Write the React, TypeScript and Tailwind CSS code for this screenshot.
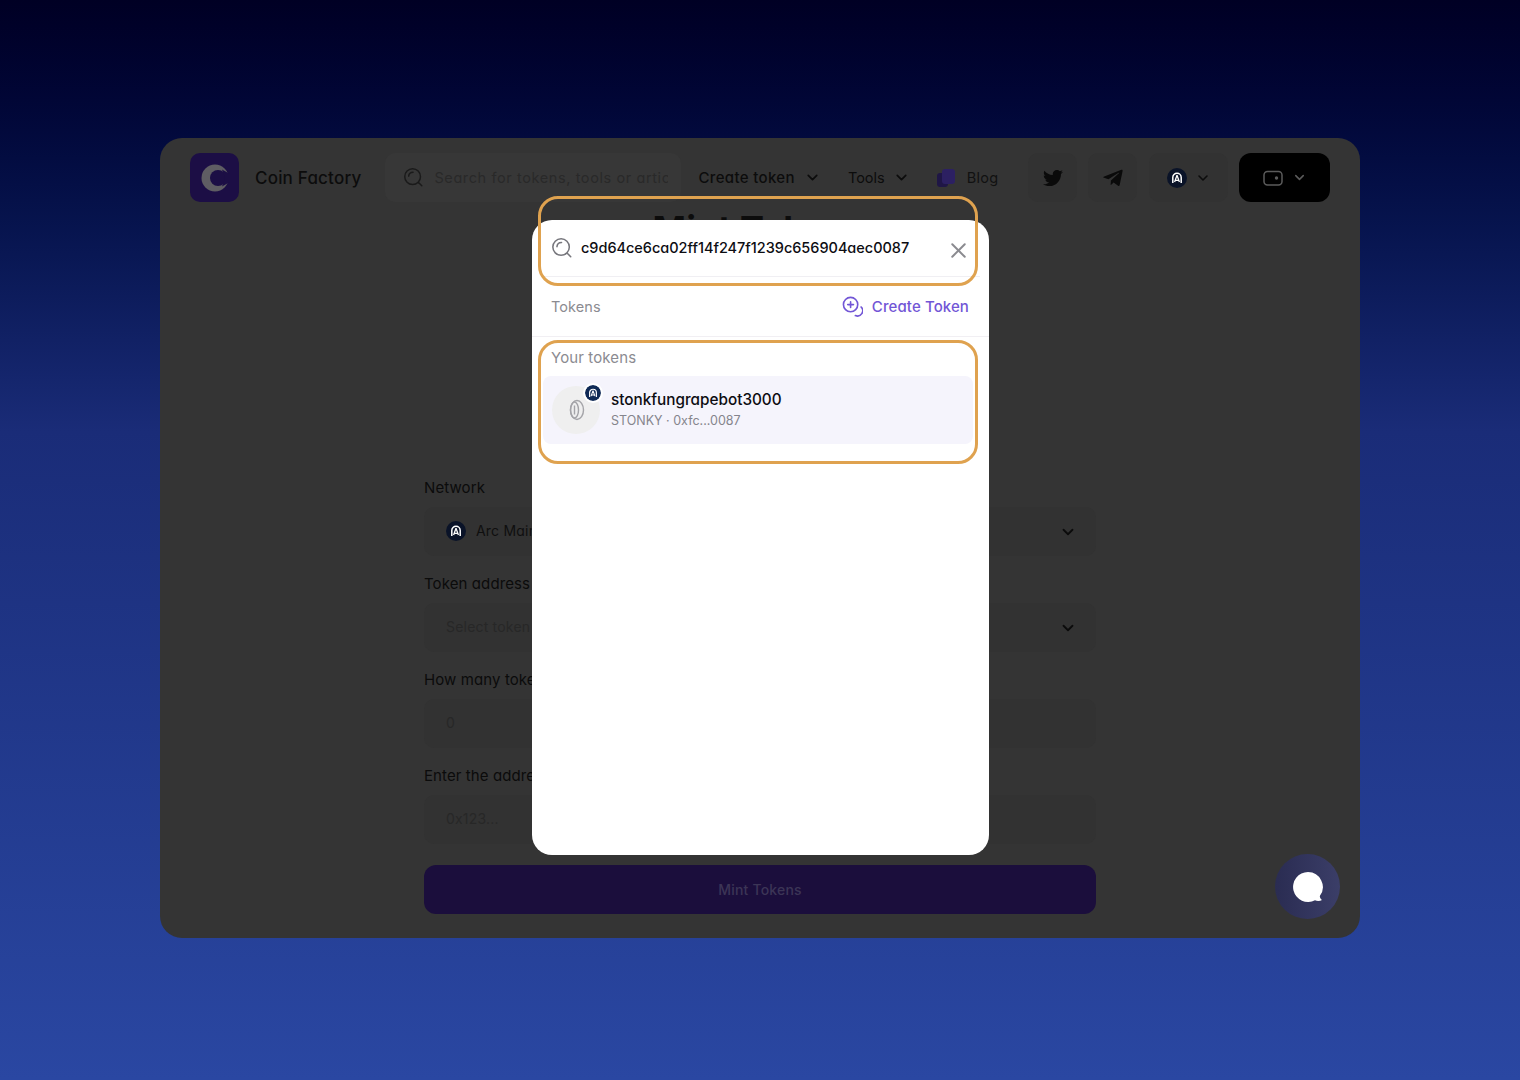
import { ChevronDown, X } from 'lucide-react'
import { FaTelegramPlane, FaTwitter } from 'react-icons/fa'

const font = "[font-family:Inter,'Liberation_Sans',sans-serif] [font-feature-settings:'cv11']"

function SearchGlyph({ className }: { className?: string }) {
  return (
    <svg viewBox="0 0 24 24" fill="none" stroke="currentColor" strokeWidth="1.7" strokeLinecap="round" className={className}>
      <circle cx="11" cy="11" r="9" />
      <path d="M6.5 10.5a5 5 0 0 1 5-4.5" />
      <path d="M18 18l3.5 3.5" />
    </svg>
  )
}

function ArcLogo({ className, ring = '#0f2a56' }: { className?: string; ring?: string }) {
  return (
    <svg viewBox="0 0 20 20" className={className}>
      <circle cx="10" cy="10" r="10" fill={ring} />
      <path d="M5.8 15V9.5a4.2 4.2 0 0 1 8.4 0V15" fill="none" stroke="#fff" strokeWidth="1.5" />
      <path d="M10 7.2 7.6 14M10 7.2l2.4 6.8M8.2 12.4h3.6" fill="none" stroke="#fff" strokeWidth="1.3" />
    </svg>
  )
}

function Field({ label, value, logo, chevron, valueClass }: { label: string; value: string; logo?: boolean; chevron?: boolean; valueClass?: string }) {
  return (
    <div className="flex flex-col">
      <div className="mt-[-1px] h-[24px] text-[15px] leading-[20px] tracking-[0.1px] text-[#0b0b0b]">{label}</div>
      <div className="mt-[5px] flex h-[49px] items-center justify-between rounded-[10px] bg-[#323232] pl-[22px] pr-[19px]">
        <div className="mt-[-1px] flex items-center gap-[10px]">
          {logo && <ArcLogo className="h-5 w-5" ring="#0a1328" />}
          <span className={`text-[14px] leading-[20px] tracking-[0.2px] ${valueClass ?? 'text-[#272727]'}`}>{value}</span>
        </div>
        {chevron && <ChevronDown className="h-[18px] w-[18px] text-[#0b0b0b]" strokeWidth={2.4} />}
      </div>
    </div>
  )
}

function Header() {
  return (
    <div className="flex h-[79px] items-center whitespace-nowrap px-[30px]">
      <div className="flex h-[49px] w-[49px] shrink-0 items-center justify-center rounded-[10px] bg-[#1c0e45]">
        <svg viewBox="0 0 30 30" className="h-[30px] w-[30px]">
          <circle cx="15" cy="15" r="13.5" fill="#5f5d63" />
          <circle cx="18" cy="15" r="8" fill="#1c0e45" />
          <path d="M22 6.5 30 11v8l-8 4.5 3-8.5z" fill="#1c0e45" />
        </svg>
      </div>
      <span className="ml-4 mt-[1px] text-[17px] font-medium leading-[26px] tracking-[0.2px] text-[#0c0c0c]">Coin Factory</span>
      <div className="ml-6 flex h-[49px] w-[296px] shrink-0 items-center gap-[10px] rounded-[10px] bg-[#373737] pl-[18px] pr-[13px]">
        <SearchGlyph className="h-[21px] w-[21px] shrink-0 text-[#1a1a1a]" />
        <span className="overflow-hidden text-[14.5px] tracking-[0.6px] text-[#292929]">Search for tokens, tools or articles</span>
      </div>
      <div className="ml-[17px] flex items-center gap-[9px] text-[15px] font-medium leading-[24px] tracking-[0.35px] text-[#0c0c0c]">
        Create token <ChevronDown className="h-[17px] w-[17px] shrink-0" strokeWidth={2.4} />
      </div>
      <div className="ml-[27px] flex items-center gap-[8px] text-[14.5px] text-[#0c0c0c]">
        Tools <ChevronDown className="h-[17px] w-[17px] shrink-0" strokeWidth={2.4} />
      </div>
      <div className="ml-[26px] flex items-center gap-[11px] text-[14.5px] tracking-[0.25px] text-[#111]">
        <svg viewBox="0 0 20 20" className="h-5 w-5 shrink-0">
          <rect x="1" y="5" width="11" height="14" rx="3" fill="#1f1646" />
          <rect x="6" y="1" width="13" height="15" rx="3" fill="#2c2062" />
        </svg>
        Blog
      </div>
      <div className="ml-[30px] flex h-[49px] w-[49px] shrink-0 items-center justify-center rounded-[10px] bg-[#323232]">
        <FaTwitter className="h-[20px] w-[20px] text-[#0a0a0a]" />
      </div>
      <div className="ml-[11px] flex h-[49px] w-[49px] shrink-0 items-center justify-center rounded-[10px] bg-[#323232]">
        <FaTelegramPlane className="h-[22px] w-[22px] text-[#0a0a0a]" />
      </div>
      <div className="ml-[12px] flex h-[49px] w-[79px] shrink-0 items-center justify-center gap-[8px] rounded-[10px] bg-[#323232]">
        <ArcLogo className="h-5 w-5" ring="#0a1328" />
        <ChevronDown className="h-[16px] w-[16px] text-[#0c0c0c]" strokeWidth={2.4} />
      </div>
      <div className="ml-[11px] flex h-[49px] w-[91px] shrink-0 items-center justify-center gap-[9px] rounded-[12px] bg-black">
        <svg viewBox="0 0 20 20" fill="none" className="h-5 w-5">
          <rect x="1" y="3.5" width="18" height="13.5" rx="3.5" stroke="#5b5b5b" strokeWidth="1.5" />
          <circle cx="13.5" cy="10" r="1.7" fill="#5b5b5b" />
        </svg>
        <ChevronDown className="h-[15px] w-[15px] text-[#5b5b5b]" strokeWidth={2.4} />
      </div>
    </div>
  )
}

function TokenModal() {
  return (
    <div className={`absolute left-[372px] top-[82px] h-[635px] w-[457px] overflow-hidden rounded-[20px] bg-white ${font}`}>
      <div className="mx-[9px] flex h-[57px] items-center border-b border-[#f0eff3] pl-[10px] pr-[9px]">
        <SearchGlyph className="h-[22px] w-[22px] shrink-0 text-[#77777d]" />
        <span className="ml-[8px] text-[14.5px] font-medium tracking-[-0.02px] text-[#0d0d12]">c9d64ce6ca02ff14f247f1239c656904aec0087</span>
        <X className="ml-auto mt-1 h-[25px] w-[25px] shrink-0 text-[#8a8a8f]" strokeWidth={1.9} />
      </div>
      <div className="flex h-[60px] items-center justify-between border-b border-[#f1eff3] pl-[19px] pr-[20px]">
        <span className="text-[14.5px] tracking-[0.08px] text-[#8b8b91]">Tokens</span>
        <div className="flex items-center gap-[9px] text-[15px] font-medium leading-[24px] tracking-[0.1px] text-[#7256d6]">
          <svg viewBox="0 0 22 22" fill="none" stroke="currentColor" strokeWidth="1.7" strokeLinecap="round" className="h-[21px] w-[21px]">
            <circle cx="9" cy="9" r="7.5" />
            <path d="M9 6v6M6 9h6" />
            <path d="M20 11.5a5.5 5.5 0 0 1-6 9" />
          </svg>
          Create Token
        </div>
      </div>
      <div className="pl-[11px] pr-[16px] pt-[12px]">
        <div className="pl-[8px] text-[15px] leading-[18px] tracking-[0.12px] text-[#8b8b91]">Your tokens</div>
        <div className="mt-[9px] flex h-[68px] items-center rounded-[8px] bg-[#f5f4fc] pl-[9px]">
          <div className="relative flex h-[48px] w-[48px] items-center justify-center rounded-full bg-[#efefef]">
            <svg viewBox="0 0 18 22" fill="none" stroke="#a4a4a8" strokeWidth="1.4" className="h-[22px] w-[18px]">
              <ellipse cx="10" cy="11" rx="6.5" ry="9.5" />
              <ellipse cx="7.5" cy="11" rx="4" ry="8" />
              <path d="M7.5 6.5v9" />
            </svg>
            <ArcLogo className="absolute -right-[1px] -top-[1px] h-4 w-4 rounded-full ring-2 ring-white" />
          </div>
          <div className="ml-[11px] mt-[-2px] flex flex-col">
            <span className="text-[15.3px] font-medium leading-[20px] text-[#0d0d12]">stonkfungrapebot3000</span>
            <span className="mt-[3px] text-[12.5px] leading-[16px] tracking-[0px] text-[#85858d]">STONKY · 0xfc...0087</span>
          </div>
        </div>
      </div>
    </div>
  )
}

export default function App() {
  return (
    <div className={`h-[1080px] w-full overflow-hidden bg-gradient-to-b from-[#000024] via-[#1a2c78] via-40% to-[#2a47a2] px-[160px] pt-[138px] ${font}`}>
      <div className="relative h-[800px] w-[1200px] overflow-hidden rounded-[22px] bg-[#343434]">
        <Header />
        <div className="mt-[-2px] flex justify-center">
          <h1 className="mt-[-6px] h-[60px] text-[36px] font-bold leading-[40px] text-[#0c0c0c]">Mint Tokens</h1>
        </div>
        <div className="mx-[264px] mt-[210px] flex flex-col gap-[19px]">
          <Field label="Network" value="Arc Mainnet" logo chevron valueClass="text-[#0f0f0f]" />
          <Field label="Token address" value="Select token" chevron />
          <Field label="How many tokens" value="0" />
          <Field label="Enter the address" value="0x123..." />
        </div>
        <div className="mx-[264px] mt-[21px] flex h-[49px] items-center justify-center rounded-[12px] bg-[#1b0e3c] text-[14px] font-medium leading-[20px] tracking-[0.2px] text-[#3c3556]">
          Mint Tokens
        </div>

        <TokenModal />

        {/* orange highlight rings from the tutorial screenshot */}
        <div className="absolute left-[378px] top-[58px] h-[90px] w-[440px] rounded-[20px] border-[3px] border-[#dfa24f]" />
        <div className="absolute left-[378px] top-[202px] h-[124px] w-[440px] rounded-[20px] border-[3px] border-[#dfa24f]" />

        <div className="absolute left-[1115px] top-[716px] flex h-[65px] w-[65px] items-center justify-center rounded-full bg-gradient-to-r from-[#2a2c52] to-[#3b3e68]">
          <svg viewBox="0 0 30 30" className="h-[30px] w-[30px]">
            <path d="M15 0a15 15 0 1 0 7 28.3c2 .8 5 .9 7-.3-1.3-.9-2.2-2.4-2.2-4A15 15 0 0 0 15 0z" fill="#fff" />
          </svg>
        </div>
      </div>
    </div>
  )
}
